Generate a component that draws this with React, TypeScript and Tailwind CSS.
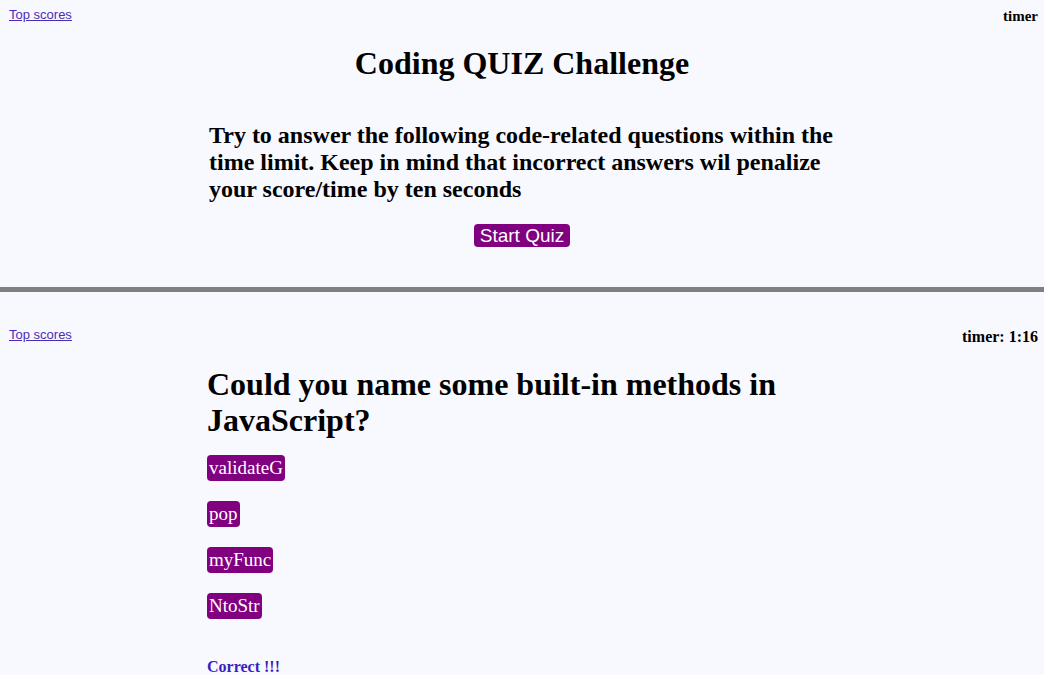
import React from 'react';

const serif = { fontFamily: '"Liberation Serif", "Times New Roman", serif' };
const sans = { fontFamily: '"Liberation Sans", Arial, sans-serif' };

const answers = ['validateG', 'pop', 'myFunc', 'NtoStr'];

const TopBar: React.FC<{ timer: string; size: string }> = ({ timer, size }) => (
  <div className="flex items-start justify-between pl-[9px] pr-[6px]">
    <a href="#" className="text-[13px] underline text-[#4b2db5]" style={sans}>
      Top scores
    </a>
    <span className={`${size} font-bold text-black`} style={serif}>
      {timer}
    </span>
  </div>
);

const App: React.FC = () => {
  return (
    <div className="bg-[#f8f8ff] min-h-[675px] w-full overflow-hidden" style={serif}>
      {/* Intro screen */}
      <section className="h-[287px] pt-[5px]">
        <TopBar timer="timer" size="text-[15px]" />
        <h1 className="text-center text-[32px] font-bold leading-[36px] mt-[17px]">Coding QUIZ Challenge</h1>
        <div className="w-[626px] mx-auto mt-[41px]">
          <p className="text-[24px] font-bold leading-[27px]">
            Try to answer the following code-related questions within the time limit. Keep in mind that incorrect answers wil penalize your score/time by ten seconds
          </p>
          <div className="flex justify-center mt-[21px]">
            <button className="bg-[#800080] text-white text-[19px] leading-[23px] px-[6px] rounded-[4px]" style={sans}>
              Start Quiz
            </button>
          </div>
        </div>
      </section>

      <div className="h-[5px] bg-[#808080]" />

      {/* Question screen */}
      <section className="pt-[33px]">
        <TopBar timer="timer: 1:16" size="text-[16px]" />
        <div className="w-[630px] mx-auto mt-[17px]">
          <h2 className="text-[32px] font-bold leading-[36px]">Could you name some built-in methods in JavaScript?</h2>
          <div className="flex flex-col items-start gap-[20px] mt-[17px]">
            {answers.map(a => (
              <button key={a} className="bg-[#800080] text-white text-[19px] leading-[26px] px-[2px] rounded-[4px]" style={serif}>
                {a}
              </button>
            ))}
          </div>
          <p className="mt-[36px] text-[16px] font-bold text-[#3a1fbf]">Correct !!!</p>
        </div>
      </section>
    </div>
  );
};

export default App;
